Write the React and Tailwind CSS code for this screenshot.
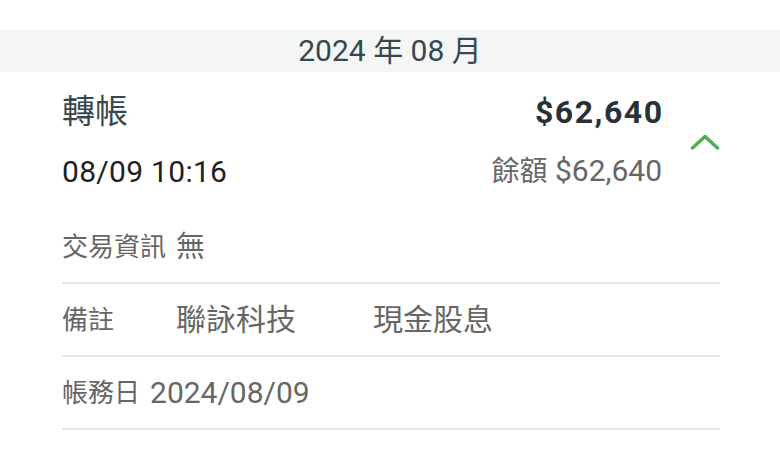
const font = { fontFamily: 'Roboto, "Noto Sans CJK TC", sans-serif' };

const ChevronUp = () => (
  <svg width="30" height="16" viewBox="0 0 30 16" fill="none">
    <path d="M2.5 14 L15 2.5 L27.5 14" stroke="#4caf50" strokeWidth="3.5" strokeLinecap="round" strokeLinejoin="round" />
  </svg>
);

const App = () => {
  return (
    <div className="w-[780px] h-[455px] bg-white overflow-hidden" style={font}>
      <div className="h-[30px]" />
      <div className="h-[42px] bg-[#f4f5f5] flex items-center justify-center">
        <span className="text-[30px] leading-none text-[#37474f]">2024 年 08 月</span>
      </div>

      <div className="pl-[62px] pr-[60px]">
        <div className="flex mt-[20px]">
          <div className="flex-1 flex flex-col gap-[19.5px]">
            <div className="h-[40px] flex items-center justify-between">
              <span className="text-[33px] leading-[40px] text-[#37474f]">轉帳</span>
              <span className="text-[32px] leading-[40px] font-bold tracking-[1.5px] mr-[-1.5px] text-[#263238]">$62,640</span>
            </div>
            <div className="h-[40px] flex items-center justify-between">
              <span className="text-[30px] leading-[40px] tracking-[0.3px] text-[#212121]">08/09 10:16</span>
              <span className="text-[30px] leading-[40px] text-[#666]">
                <span className="text-[28px]">餘額</span> $62,640
              </span>
            </div>
          </div>
          <div className="w-[58px] flex items-center justify-end pt-[1px]">
            <ChevronUp />
          </div>
        </div>

        <div className="mt-[19.5px]">
          <div className="h-[73px] flex items-center border-b-2 border-[#e6e6e6] text-[#666]">
            <span className="text-[26px] leading-[36px]">交易資訊</span>
            <span className="text-[29px] leading-[36px] ml-[10px]">無</span>
          </div>
          <div className="h-[73px] flex items-center border-b-2 border-[#e6e6e6] text-[#666]">
            <span className="text-[26px] leading-[36px]">備註</span>
            <span className="text-[30px] leading-[36px] ml-[62px]">聯詠科技</span>
            <span className="text-[30px] leading-[36px] ml-[77px]">現金股息</span>
          </div>
          <div className="h-[73px] flex items-center border-b-2 border-[#e6e6e6] text-[#666]">
            <span className="text-[26px] leading-[36px]">帳務日</span>
            <span className="text-[30px] leading-[36px] ml-[10px]">2024/08/09</span>
          </div>
        </div>
      </div>
    </div>
  );
};

export default App;
